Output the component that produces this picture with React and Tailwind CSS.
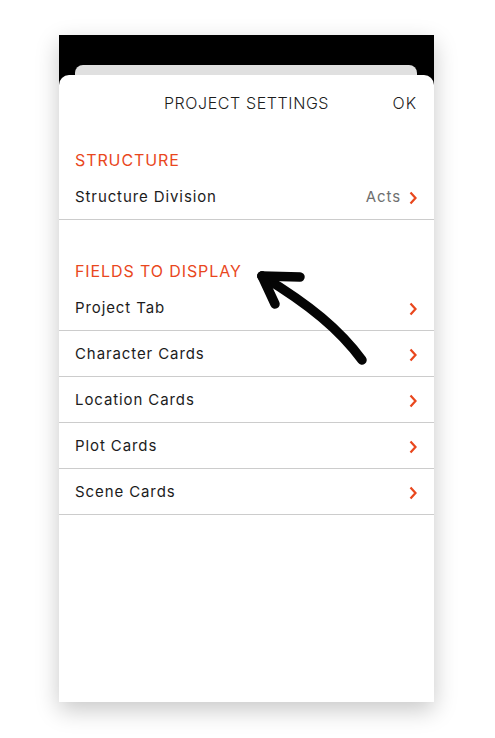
import React from "react";

const Chevron = () => (
  <svg width="10" height="14" viewBox="0 0 10 14" className="shrink-0">
    <path d="M2.5 1.5 L7.5 7 L2.5 12.5" fill="none" stroke="#e9471d" strokeWidth="2.2" strokeLinecap="butt" strokeLinejoin="miter" />
  </svg>
);

const Row = ({ label, value }) => (
  <div className="h-[46px] border-b border-[#cccccc] flex items-center pl-4 pr-[16px] pt-[2px]">
    <span className="flex-1 text-[15px] text-[#1c1c1c] tracking-[0.9px]">{label}</span>
    {value && <span className="text-[15px] text-[#6f6f6f] mr-[7px] tracking-[0.9px]">{value}</span>}
    <Chevron />
  </div>
);

export default function App() {
  return (
    <div className="w-[495px] h-[738px] bg-white pt-[35px] pl-[59px]" style={{ fontFamily: "Inter, 'Noto Sans', sans-serif" }}>
      <div className="relative w-[375px] h-[667px] bg-black flex flex-col shadow-[0_8px_22px_rgba(0,0,0,0.22)]">
        <div className="mt-[30px] ml-[16px] mr-[17px] h-[10px] bg-[#e0e0e0] rounded-t-[8px]"></div>
        <div className="flex-1 bg-white rounded-t-[10px] flex flex-col">
          <div className="h-[56px] relative flex items-center justify-center">
            <span className="text-[16px] font-light text-[#1c1c1c] tracking-[0.6px]">PROJECT SETTINGS</span>
            <span className="absolute right-[17px] text-[16px] font-light text-[#1c1c1c] tracking-[1px]">OK</span>
          </div>
          <div className="pl-4 pt-[17px] pb-[5px] h-[43px]">
            <span className="text-[16px] font-normal text-[#e9471d] leading-[20px] tracking-[0.9px]">STRUCTURE</span>
          </div>
          <Row label="Structure Division" value="Acts" />
          <div className="pl-4 pt-[39px] h-[65px]">
            <span className="text-[16px] font-normal text-[#e9471d] leading-[20px] tracking-[0.9px]">FIELDS TO DISPLAY</span>
          </div>
          <Row label="Project Tab" />
          <Row label="Character Cards" />
          <Row label="Location Cards" />
          <Row label="Plot Cards" />
          <Row label="Scene Cards" />
        </div>
        <svg className="absolute left-0 top-0 pointer-events-none" width="375" height="667" viewBox="59 35 375 667">
          <g fill="none" stroke="#050505" strokeWidth="9.5" strokeLinecap="round" strokeLinejoin="round">
            <path d="M362 360 C 340 330, 310 305, 262 276" />
            <path d="M262 276 L 300 277" />
            <path d="M262 276 L 275 304" />
          </g>
        </svg>
      </div>
    </div>
  );
}
